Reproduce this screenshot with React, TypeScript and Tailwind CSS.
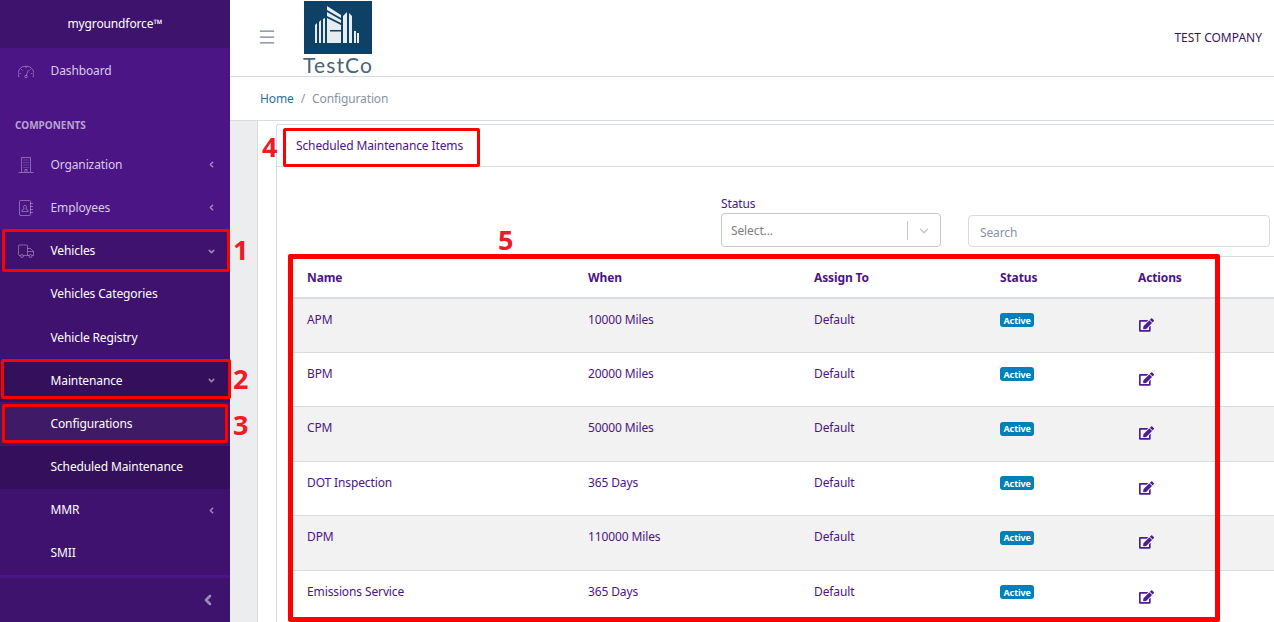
import { ChevronLeft, ChevronDown, Menu } from 'lucide-react';
import { FaEdit } from 'react-icons/fa';

const rows = [
  { name: 'APM', when: '10000 Miles' },
  { name: 'BPM', when: '20000 Miles' },
  { name: 'CPM', when: '50000 Miles' },
  { name: 'DOT Inspection', when: '365 Days' },
  { name: 'DPM', when: '110000 Miles' },
  { name: 'Emissions Service', when: '365 Days' },
];

const SpeedIcon = ({ className }: any) => (
  <svg viewBox="0 0 16 16" className={className} fill="none" stroke="currentColor" strokeWidth="1">
    <path d="M1.2 14H.9A7.4 7.4 0 0 1 8 3.2 7.4 7.4 0 0 1 15.1 14h-.3" />
    <path d="M8 3.4v1.8M3.3 6.3l1.2 1.2M12.7 6.3l-1.2 1.2M1.5 10.5h1.6M13 10.5h1.6M8.3 12.5l2-5.5" />
    <circle cx="8" cy="13.6" r="1.3" />
  </svg>
);

const BuildingIcon = ({ className }: any) => (
  <svg viewBox="0 0 16 16" className={className} fill="none" stroke="currentColor" strokeWidth="1">
    <path d="M3.5 15V.5h9V15M.5 15.5h15" />
    <path d="M5.5 3h1M7.5 3h1M9.5 3h1M5.5 5.5h1M7.5 5.5h1M9.5 5.5h1M5.5 8h1M7.5 8h1M9.5 8h1M5.5 10.5h1M7.5 10.5h1M9.5 10.5h1M7 15v-2.5h2V15" />
  </svg>
);

const BookIcon = ({ className }: any) => (
  <svg viewBox="0 0 16 16" className={className} fill="none" stroke="currentColor" strokeWidth="1">
    <rect x="1.5" y=".5" width="11" height="15" rx="1" />
    <path d="M4 11.5v-1.5l2-1v-1a1.500 1.500 0 1 1 2 0v1l2 1v1.500z" />
    <path d="M12 3.500h3M12 6.500h3M12 9.500h3M12 12.500h3" />
  </svg>
);

const TruckIcon = ({ className }: any) => (
  <svg viewBox="0 0 16 16" className={className} fill="none" stroke="currentColor" strokeWidth="1">
    <path d="M2.500 12.500h-1a1 1 0 0 1-1-1V3a1 1 0 0 1 1-1h7a1 1 0 0 1 1 1v9.500H5.500" />
    <path d="M9.500 5.500h3l3 3v4h-1.500M11 12.500H9.500M9.500 8.500h6" />
    <circle cx="4" cy="13" r="1.500" />
    <circle cx="12.500" cy="13" r="1.500" />
  </svg>
);

const NavItem = ({ label, icon: Icon, arrow, className = '', textClass = 'text-white' }: any) => (
  <div className={`h-[43.2px] flex items-center shrink-0 pl-[18px] pr-[14px] ${className}`}>
    <div className="w-[32.500px] shrink-0">
      {Icon && <Icon className="w-[16px] h-[16px] text-white/35" />}
    </div>
    <span className={`text-[12px] ${textClass}`}>{label}</span>
    {arrow === 'left' && <ChevronLeft className="w-[9px] h-[9px] ml-auto text-white/50" strokeWidth={4} />}
    {arrow === 'down' && <ChevronDown className="w-[9px] h-[9px] ml-auto text-white/50" strokeWidth={4} />}
  </div>
);

const Sidebar = () => (
  <aside className="w-[230px] shrink-0 h-full flex flex-col bg-[#4c1585] overflow-hidden">
    <div className="h-12 shrink-0 flex items-center justify-center bg-[#3d136d] text-white text-[12px]">
      mygroundforce™
    </div>
    <NavItem label="Dashboard" icon={SpeedIcon} className="mt-[1px]" textClass="text-[#d8cbe6]" />
    <div className="h-[38px] pt-[28px] pl-[15px] text-[10px] tracking-normal font-bold text-[#b8a3d0] leading-none shrink-0 mb-[13px]">COMPONENTS</div>
    <NavItem label="Organization" icon={BuildingIcon} arrow="left" textClass="text-[#d8cbe6]" />
    <NavItem label="Employees" icon={BookIcon} arrow="left" textClass="text-[#d8cbe6]" />
    <div className="flex-1 bg-[#40126f] flex flex-col">
      <NavItem label="Vehicles" icon={TruckIcon} arrow="down" />
      <NavItem label="Vehicles Categories" />
      <NavItem label="Vehicle Registry" />
      <div className="bg-[#340f5b]">
        <NavItem label="Maintenance" arrow="down" />
        <NavItem label="Configurations" className="bg-[#3f1a66]" />
        <NavItem label="Scheduled Maintenance" />
      </div>
      <NavItem label="MMR" arrow="left" />
      <NavItem label="SMII" />
    </div>
    <div className="h-[44px] shrink-0 mt-[3px] bg-[#3d136d] flex items-center justify-end pr-[14px]">
      <ChevronLeft className="w-4 h-4 text-white/50" strokeWidth={4} />
    </div>
  </aside>
);

const Logo = () => (
  <div className="w-[68px] flex flex-col items-center">
    <div className="w-[68px] h-[53px] bg-[#0d4166] flex items-center justify-center">
      <svg width="68" height="53" viewBox="0 0 68 53" fill="#e6ecf0">
        <path d="M11 24l2-2v20h-2zM15 21l2-2v23h-2zM19 18l2-1v25h-2z" />
        <path d="M23 5l14 9v3L23 9zM23 11l14 8v3l-14-7zM23 17l14 7v18H23z" />
        <path d="M26 29h11v1.500H26z" fill="#0d4166" />
        <path d="M39 15l4-4v31h-4z" />
        <path d="M45 12l3 3v27h-3z" />
        <path d="M50 30h2v12h-2zM53 32h2v10h-2z" />
      </svg>
    </div>
    <span className="text-[21px] leading-[22px] font-normal text-[#4a6478] tracking-[1.1px]" style={{ fontFamily: 'Lato, sans-serif' }}>TestCo</span>
  </div>
);

const Marks = () => (
  <div className="tracking-normal">
    <div className="absolute left-[2px] top-[229px] w-[228px] h-[43px] border-[3px] border-[#ff0000] rounded-[2px]" />
    <div className="absolute left-[1px] top-[359px] w-[230px] h-[40px] border-[3px] border-[#ff0000] rounded-[2px]" />
    <div className="absolute left-[2px] top-[404px] w-[226px] h-[39px] border-[3px] border-[#ff0000] rounded-[2px]" />
    <div className="absolute left-[283px] top-[128px] w-[197px] h-[39px] border-[3px] border-[#ff0000] rounded-[2px]" />
    <div className="absolute left-[288px] top-[254px] w-[932px] h-[368px] border-[5px] border-[#ff0000] rounded-[2px]" />
    <span className="absolute left-[233px] top-[232px] text-[27px] leading-9 font-bold text-[#ee1c25]">1</span>
    <span className="absolute left-[233px] top-[361px] text-[27px] leading-9 font-bold text-[#ee1c25]">2</span>
    <span className="absolute left-[233px] top-[407px] text-[27px] leading-9 font-bold text-[#ee1c25]">3</span>
    <span className="absolute left-[262px] top-[129px] text-[27px] leading-9 font-bold text-[#ee1c25]">4</span>
    <span className="absolute left-[498px] top-[222px] text-[27px] leading-9 font-bold text-[#ee1c25]">5</span>
  </div>
);

export default function App() {
  return (
    <div className="relative w-[1274px] h-[622px] overflow-hidden flex bg-white text-[12px] tracking-[-0.12px]" style={{ fontFamily: '"Noto Sans", "Open Sans", sans-serif' }}>
      <Sidebar />
      <main className="flex-1 min-w-0 flex flex-col">
        <header className="h-[77px] shrink-0 border-b border-[#d8dbe0] flex items-start pl-[27px] pr-[12px]">
          <Menu className="w-[20px] h-[20px] mt-[27px] text-[#768192]" strokeWidth={1.500} />
          <div className="ml-[27px] mt-[1px]"><Logo /></div>
          <span className="ml-auto mt-[29px] text-[12px] tracking-normal text-[#3c1361]">TEST COMPANY</span>
        </header>
        <div className="h-[44px] shrink-0 border-b border-[#d8dbe0] flex items-center pl-[30px] gap-[7px] text-[12px]">
          <span className="text-[#2a6f97]">Home</span>
          <span className="text-[#8a93a2]">/</span>
          <span className="text-[#8a93a2]">Configuration</span>
        </div>
        <div className="flex-1 min-h-0 bg-[#ebedef] pl-[27px]">
          <div className="h-full bg-white border-l border-[#d8dbe0] pl-[18px] pt-[3px]">
            <div className="h-full border-l border-t border-[#d8dbe0] rounded-tl-[3px]">
              <div className="h-[42px] border-b border-[#d8dbe0] flex items-center pl-[19px] text-[#4c1585]">
                Scheduled Maintenance Items
              </div>
              <div className="h-[89px] relative flex items-end pl-[444px] pr-[4px] pb-[9px] gap-[27px]">
                <div className="w-[220px] shrink-0">
                  <div className="text-[#4c1585] leading-[17px] mb-[1px]">Status</div>
                  <div className="h-[34px] border border-[#c4c9d0] rounded-[4px] flex items-center pl-[9px] pt-[1px] text-[#808080]">
                    Select...
                    <span className="ml-auto w-px h-[19px] bg-[#c4c9d0]" />
                    <ChevronDown className="w-[14px] h-[14px] mx-[9px] text-[#c4c9d0]" strokeWidth={2.500} />
                  </div>
                </div>
                <div className="flex-1 h-[32px] border border-[#d8dbe0] rounded-[4px] flex items-center pl-[11px] pt-[3px] text-[#8a93a2]">Search</div>
              </div>
              <table className="ml-[14px] w-[983px] table-fixed border-collapse text-[#4c1585]">
                <thead>
                  <tr className="h-[41px] border-t border-b-2 border-[#d8dbe0] text-left">
                    <th className="w-[297px] pl-[16px] pt-[3px] font-bold">Name</th>
                    <th className="w-[226px] pt-[3px] font-bold">When</th>
                    <th className="w-[186px] pt-[3px] font-bold">Assign To</th>
                    <th className="w-[138px] pt-[3px] font-bold">Status</th>
                    <th className="pt-[3px] font-bold">Actions</th>
                  </tr>
                </thead>
                <tbody>
                  {rows.map((row, i) => (
                    <tr key={row.name} className={`h-[54.600px] border-b border-[#d8dbe0] align-top ${i % 2 === 0 ? 'bg-[#f2f2f2]' : 'bg-white'}`}>
                      <td className="pl-[16px] pt-[12px]">{row.name}</td>
                      <td className="pt-[12px]">{row.when}</td>
                      <td className="pt-[12px]">Default</td>
                      <td className="pt-[12px]">
                        <span className="inline-flex h-[14px] items-center px-[3.500px] rounded-[3px] bg-[#0080b8] text-white text-[9px] font-bold leading-none">Active</span>
                      </td>
                      <td className="pt-[19px]"><FaEdit className="ml-[1px] w-[15px] h-[14px] text-[#4c1d95]" /></td>
                    </tr>
                  ))}
                </tbody>
              </table>
            </div>
          </div>
        </div>
      </main>
      <Marks />
    </div>
  );
}
